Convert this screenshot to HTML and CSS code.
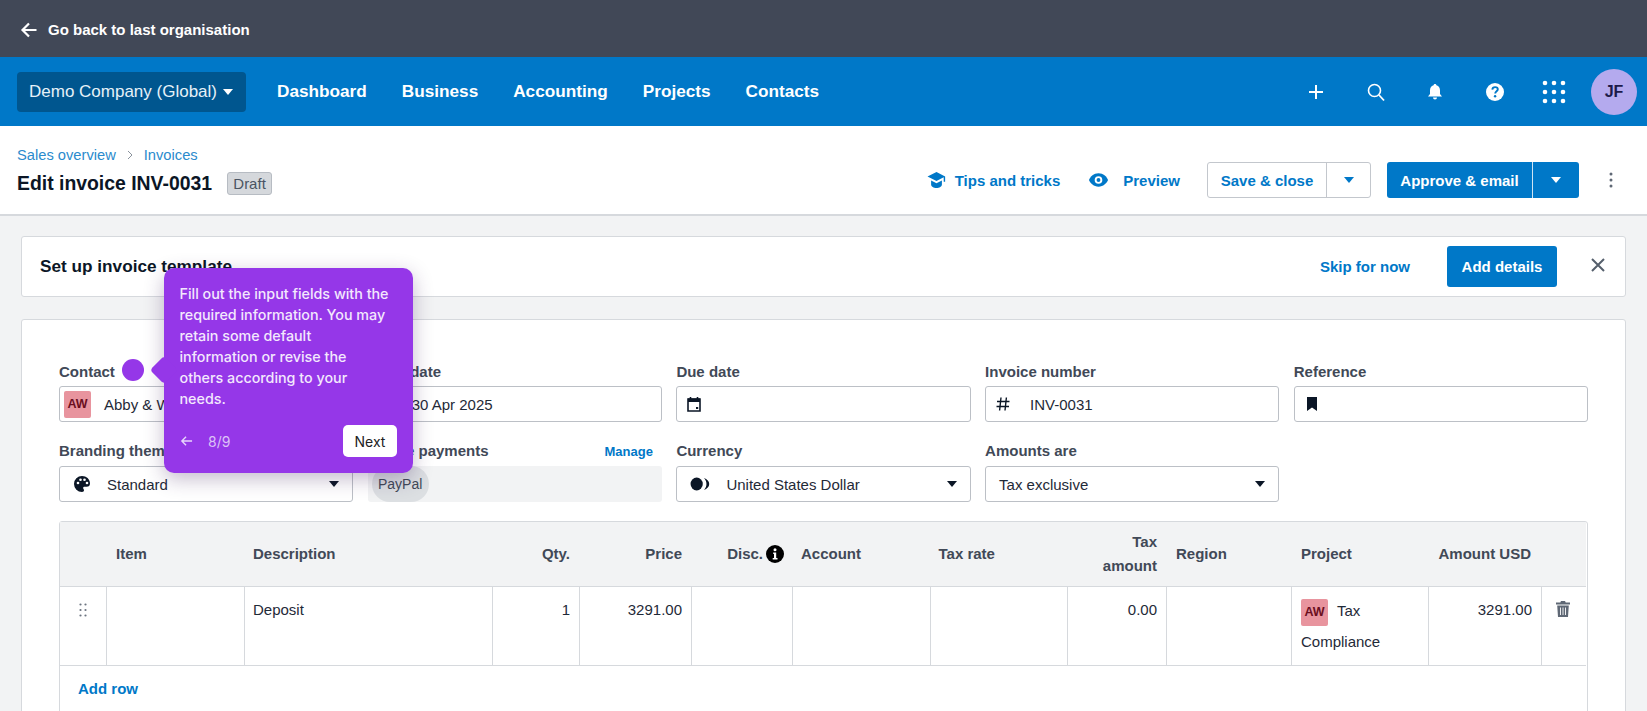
FILE: index.html
```html
<!DOCTYPE html>
<html lang="en">
<head>
<meta charset="utf-8">
<title>Edit invoice INV-0031</title>
<link rel="stylesheet" href="styles.css">
</head>
<body>
<div class="page">
  <div class="backbar">
    <svg class="ic18" viewBox="0 0 18 18"><path d="M16.5 9H3M9 2.5 2.5 9 9 15.5" fill="none" stroke="#fff" stroke-width="2.2"/></svg>
    <span>Go back to last organisation</span>
  </div>
  <nav class="topnav">
    <button class="org">Demo Company (Global)<i class="caret caret-w"></i></button>
    <div class="navlinks"><a>Dashboard</a><a>Business</a><a>Accounting</a><a>Projects</a><a>Contacts</a></div>
    <div class="navicons">
      <svg viewBox="0 0 20 20"><path d="M10 3v14M3 10h14" stroke="#fff" stroke-width="2"/></svg>
      <svg viewBox="0 0 20 20"><circle cx="8.5" cy="8.5" r="6" fill="none" stroke="#fff" stroke-width="1.6"/><path d="m13 13 5 5.5" stroke="#fff" stroke-width="1.8"/></svg>
      <svg viewBox="0 0 20 20"><path d="M10 2c.8 0 1.3.5 1.4 1.2C14 4 15 6 15 8.500v3.500l2 2.500H3l2-2.500V8.500C5 6 6 4 8.600 3.200 8.700 2.500 9.200 2 10 2Zm-2 13.500h4a2 2 0 0 1-4 0Z" fill="#fff"/></svg>
      <svg viewBox="0 0 20 20"><circle cx="10" cy="10" r="9" fill="#fff"/><path d="M7.300 7.600c.1-1.600 1.200-2.500 2.800-2.500s2.700.9 2.700 2.200c0 2-2.500 2-2.600 4.200" fill="none" stroke="#0078c8" stroke-width="1.900"/><circle cx="10.100" cy="14.300" r="1.200" fill="#0078c8"/></svg>
      <svg viewBox="0 0 24 24" class="apps"><g fill="#fff"><circle cx="3" cy="3" r="2.300"/><circle cx="12" cy="3" r="2.300"/><circle cx="21" cy="3" r="2.300"/><circle cx="3" cy="12" r="2.300"/><circle cx="12" cy="12" r="2.300"/><circle cx="21" cy="12" r="2.300"/><circle cx="3" cy="21" r="2.300"/><circle cx="12" cy="21" r="2.300"/><circle cx="21" cy="21" r="2.300"/></g></svg>
      <span class="avatar">JF</span>
    </div>
  </nav>
  <header class="pagehead">
    <div>
      <div class="crumbs"><a>Sales overview</a><svg viewBox="0 0 8 10"><path d="m2 1 4 4-4 4" fill="none" stroke="#8a929c" stroke-width="1"/></svg><a>Invoices</a></div>
      <div class="titlerow"><h1>Edit invoice INV-0031</h1><span class="draft">Draft</span></div>
    </div>
    <div class="actions">
      <a class="tlink tips"><svg viewBox="0 0 22 20"><path d="M11 1 1 6l10 5 8-4v5h1.600V6L11 1Z" fill="#0078c8"/><path d="M5 10.500V15c0 2.400 2.800 4 6 4s6-1.600 6-4v-4.500l-6 3-6-3Z" fill="#0078c8"/></svg>Tips and tricks</a>
      <a class="tlink preview"><svg viewBox="0 0 22 16"><path d="M11 1C6 1 2.500 4.500 1 8c1.500 3.500 5 7 10 7s8.500-3.500 10-7c-1.500-3.500-5-7-10-7Z" fill="#0078c8"/><circle cx="11" cy="8" r="4" fill="#fff"/><circle cx="11" cy="8" r="2" fill="#0078c8"/></svg>Preview</a>
      <div class="split split-o"><span class="main">Save &amp; close</span><span class="drop"><i class="caret caret-b"></i></span></div>
      <div class="split split-f"><span class="main">Approve &amp; email</span><span class="drop"><i class="caret caret-w"></i></span></div>
      <svg class="kebab" viewBox="0 0 4 16"><g fill="#5f6875"><circle cx="2" cy="2" r="1.500"/><circle cx="2" cy="8" r="1.500"/><circle cx="2" cy="14" r="1.500"/></g></svg>
    </div>
  </header>
  <main class="content">
    <section class="banner">
      <strong>Set up invoice template</strong>
      <div class="banner-right">
        <a class="skip">Skip for now</a>
        <button class="addbtn">Add details</button>
        <svg class="close" viewBox="0 0 14 14"><path d="m1 1 12 12M13 1 1 13" stroke="#555f6c" stroke-width="2"/></svg>
      </div>
    </section>
    <section class="card">
      <div class="fields">
        <div class="field"><label>Contact</label><div class="input"><span class="chip">AW</span><span class="val val-contact">Abby &amp; Wong Title Co.</span></div></div>
        <div class="field"><label>Issue date</label><div class="input"><svg class="fi" viewBox="0 0 14 16"><path d="M1 3h12v12H1z" fill="none" stroke="#0b1626" stroke-width="1.600"/><path d="M1 2.500h12V6H1z" fill="#0b1626"/><path d="M3.500 1v2M10.500 1v2" stroke="#0b1626" stroke-width="1.600"/><path d="M9 11h2.200v2H9z" fill="#0b1626"/></svg><span class="val val-date">30 Apr 2025</span></div></div>
        <div class="field"><label>Due date</label><div class="input"><svg class="fi" viewBox="0 0 14 16"><path d="M1 3h12v12H1z" fill="none" stroke="#0b1626" stroke-width="1.600"/><path d="M1 2.500h12V6H1z" fill="#0b1626"/><path d="M3.500 1v2M10.500 1v2" stroke="#0b1626" stroke-width="1.600"/><path d="M9 11h2.200v2H9z" fill="#0b1626"/></svg></div></div>
        <div class="field"><label>Invoice number</label><div class="input"><svg class="fi" viewBox="0 0 14 16"><path d="M5 1.500 3.600 14.500M10.400 1.500 9 14.500M1 5.500h12.500M.5 10.500H13" stroke="#0b1626" stroke-width="1.400"/></svg><span class="val val-num">INV-0031</span></div></div>
        <div class="field"><label>Reference</label><div class="input"><svg class="fi" viewBox="0 0 14 16"><path d="M2 1h10v14l-5-3.500L2 15z" fill="#0b1626"/></svg></div></div>
        <div class="field row2"><label>Branding theme</label><div class="input sel"><svg class="fi fi-l" viewBox="0 0 18 18"><path d="M9 1a8 8 0 0 0 0 16c1.300 0 2-.8 2-1.700 0-1.100-.9-1.400-.9-2.300 0-.8.700-1.300 1.500-1.300H13.500A3.500 3.500 0 0 0 17 8.200C17 4.200 13.400 1 9 1Z" fill="#0b1626"/><g fill="#fff"><circle cx="5" cy="8" r="1.300"/><circle cx="7.500" cy="4.800" r="1.300"/><circle cx="11.500" cy="4.800" r="1.300"/><circle cx="14" cy="8" r="1.300"/></g></svg><span class="val val-sel">Standard</span><i class="caret caret-k"></i></div></div>
        <div class="field row2"><div class="labelrow"><label>Online payments</label><a class="manage">Manage</a></div><div class="paybox"><span class="paychip">PayPal</span></div></div>
        <div class="field row2"><label>Currency</label><div class="input sel"><svg class="fi fi-c" viewBox="0 0 18 12"><ellipse cx="6" cy="6" rx="5.500" ry="5.800" fill="#0b1626"/><path d="M12.500.6c3 1 4.800 3 4.800 5.400s-1.800 4.400-4.800 5.400c1.500-1.400 2.300-3.300 2.300-5.400S14 2 12.500.6Z" fill="#0b1626"/></svg><span class="val val-cur">United States Dollar</span><i class="caret caret-k"></i></div></div>
        <div class="field row2"><label>Amounts are</label><div class="input sel"><span class="val">Tax exclusive</span><i class="caret caret-k"></i></div></div>
      </div>
      <div class="tablewrap">
        <div class="table">
          <div class="th"></div>
          <div class="th th-item">Item</div>
          <div class="th">Description</div>
          <div class="th r">Qty.</div>
          <div class="th r">Price</div>
          <div class="th r disc">Disc.<svg viewBox="0 0 18 18"><circle cx="9" cy="9" r="9" fill="#000"/><path d="M7.200 7.500h3v5.500h1.300v1.500H6.700V13h1.300V9H7.200z" fill="#fff"/><circle cx="9" cy="4.800" r="1.500" fill="#fff"/></svg></div>
          <div class="th">Account</div>
          <div class="th">Tax rate</div>
          <div class="th r">Tax<br>amount</div>
          <div class="th th-wide">Region</div>
          <div class="th th-wide">Project</div>
          <div class="th r th-end">Amount USD</div>
          <div class="th"></div>
          <div class="td center"><svg class="drag" viewBox="0 0 8 14"><g fill="#6c7480"><circle cx="1.500" cy="1.500" r="1.100"/><circle cx="6.500" cy="1.500" r="1.100"/><circle cx="1.500" cy="7" r="1.100"/><circle cx="6.500" cy="7" r="1.100"/><circle cx="1.500" cy="12.500" r="1.100"/><circle cx="6.500" cy="12.500" r="1.100"/></g></svg></div>
          <div class="td"></div>
          <div class="td">Deposit</div>
          <div class="td r">1</div>
          <div class="td r">3291.00</div>
          <div class="td"></div>
          <div class="td"></div>
          <div class="td"></div>
          <div class="td r">0.00</div>
          <div class="td"></div>
          <div class="td project"><span class="chip chip-p">AW</span>Tax Compliance</div>
          <div class="td r">3291.00</div>
          <div class="td center last"><svg class="trash" viewBox="0 0 14 16"><path d="M5 0h4l.7 1.500H14v2H0v-2h4.300L5 0ZM1.200 4.500h11.600L12 16H2L1.200 4.500Z" fill="#5f6875"/><path d="M4.500 6.500v7.500M7 6.500v7.500M9.500 6.500v7.500" stroke="#fff" stroke-width=".9"/></svg></div>
        </div>
        <a class="addrow">Add row</a>
      </div>
    </section>
  </main>
  <i class="dot"></i>
  <aside class="tip">
    <p>Fill out the input fields with the<br>required information. You may<br>retain some default<br>information or revise the<br>others according to your<br>needs.</p>
    <div class="tipfoot">
      <svg viewBox="0 0 14 12"><path d="M13 6H2M6.500 1.500 2 6l4.500 4.500" fill="none" stroke="#e8d5fb" stroke-width="1.500"/></svg>
      <span class="count">8/9</span>
      <button>Next</button>
    </div>
  </aside>
</div>
</body>
</html>
```
FILE: styles.css
```css
* { box-sizing: border-box; }
html, body { margin: 0; height: 100%; overflow: hidden; }
body { font-family: "Liberation Sans", Arial, sans-serif; font-size: 15px; color: #1f2a38; background: #f2f3f4; }
a { color: #0078c8; text-decoration: none; }
button { font-family: inherit; border: 0; }
.page { position: relative; height: 711px; overflow: hidden; }

.backbar { height: 57px; background: #414857; color: #fff; font-weight: 700; display: flex; align-items: center; gap: 10px; padding: 2px 0 0 20px; }
.ic18 { width: 18px; height: 18px; }

.topnav { height: 69px; background: #0078c8; display: flex; align-items: center; padding: 0 10px 0 17px; color: #fff; }
.org { width: 229px; height: 40px; background: #00568f; color: #e6f1f8; font-size: 17px; border-radius: 4px; display: flex; align-items: center; padding: 0 0 0 12px; gap: 6px; white-space: nowrap; }
.navlinks { display: flex; gap: 35px; margin-left: 31px; font-weight: 700; font-size: 17.200px; }
.navlinks a { color: #fff; }
.navicons { margin-left: auto; display: flex; align-items: center; }
.navicons svg { width: 20px; height: 20px; margin-right: 39.5px; }
.navicons svg.apps { width: 24px; height: 24px; margin: 0 25px 0 -2px; }
.avatar { width: 46px; height: 46px; border-radius: 50%; background: #b4aaee; color: #1c1a4a; font-weight: 700; font-size: 16px; display: flex; align-items: center; justify-content: center; }

.caret { display: inline-block; width: 0; height: 0; border-left: 5.500px solid transparent; border-right: 5.500px solid transparent; border-top: 6px solid; }
.caret-w { color: #fff; }
.caret-b { color: #0078c8; }
.caret-k { color: #0b1626; margin-left: auto; }

.pagehead { height: 90px; background: #fff; border-bottom: 2px solid #d6d9dd; display: flex; justify-content: space-between; padding: 19px 0 0 17px; }
.crumbs { display: flex; align-items: center; gap: 10px; height: 20px; color: #2b8bcd; font-size: 14.700px; }
.crumbs a { color: #2b8bcd; }
.crumbs svg { width: 8px; height: 10px; }
.titlerow { display: flex; align-items: center; gap: 15px; margin-top: 6px; height: 24px; }
h1 { margin: 0; font-size: 19.400px; font-weight: 700; color: #0b1626; }
.draft { width: 45px; height: 23px; background: #d5d8dc; border: 1px solid #b7bcc3; border-radius: 3px; color: #4a5462; font-size: 15px; display: flex; align-items: center; justify-content: center; }
.actions { display: flex; align-items: center; height: 36px; margin-top: 17px; padding-right: 34px; }
.tlink { font-weight: 700; display: flex; align-items: center; }
.tlink svg { width: 21px; height: 18px; }
.tips svg { margin-right: 8px; }
.tips { margin-right: 28px; }
.preview svg { margin-right: 14px; }
.preview { margin-right: 27px; }
.split { display: flex; height: 36px; border-radius: 3px; font-weight: 700; }
.split .main { display: flex; align-items: center; justify-content: center; }
.split .drop { display: flex; align-items: center; justify-content: center; }
.split-o { width: 164px; border: 1px solid #c3c7cd; color: #0078c8; margin-right: 16px; }
.split-o .drop { width: 43px; }
.split-o .main { flex: 1; border-right: 1px solid #c3c7cd; }
.split-f { width: 192px; background: #0078c8; color: #fff; }
.split-f .drop { width: 46px; }
.split-f .main { flex: 1; border-right: 1px solid #cfe4f3; }
.kebab { width: 4px; height: 16px; margin-left: 30px; }

.content { padding: 20px 21px 0; }
.banner { height: 61px; width: 1605px; background: #fff; border: 1px solid #d6d9dd; border-radius: 3px; display: flex; align-items: center; justify-content: space-between; padding: 0 20px 0 18px; }
.banner strong { font-size: 17.200px; color: #0b1626; }
.banner-right { display: flex; align-items: center; }
.skip { font-weight: 700; margin-right: 37px; }
.addbtn { width: 110px; height: 41px; background: #0078c8; color: #fff; font-size: 15px; font-weight: 700; border-radius: 3px; margin-right: 34px; }
.close { width: 14px; height: 14px; margin-bottom: 3px; }

.card { width: 1605px; height: 420px; margin-top: 22px; background: #fff; border: 1px solid #d6d9dd; border-radius: 3px; padding: 42px 37px 0 37px; }
.fields { display: grid; grid-template-columns: repeat(5, 294.2px); column-gap: 14.5px; row-gap: 19px; }
.field label { display: block; font-weight: 700; color: #414957; line-height: 20px; }
.field > label { margin-bottom: 4px; }
.row2 > label { margin-bottom: 5px; }
.labelrow { display: flex; justify-content: space-between; align-items: center; height: 25px; padding: 0 9px 5px 0; }
.manage { font-weight: 700; font-size: 13px; }
.input { height: 36px; border: 1px solid #bcc0c6; border-radius: 3px; background: #fff; display: flex; align-items: center; padding: 0 10px; color: #1f2a38; white-space: nowrap; overflow: hidden; }
.input.sel { padding: 0 13px; }
.chip { width: 27px; height: 27px; margin-left: -6px; background: #e8949e; border-radius: 2px; color: #6b0f1e; font-weight: 700; font-size: 12.500px; display: inline-flex; align-items: center; justify-content: center; flex: none; }
.val-contact { margin-left: 13px; }
.fi { width: 14px; height: 16px; flex: none; }
.fi-l { width: 18px; height: 18px; }
.fi-c { width: 20px; height: 14px; }
.val-date { margin-left: 19px; }
.val-num { margin-left: 20px; }
.val-sel { margin-left: 16px; }
.val-cur { margin-left: 16px; }
.paybox { height: 36px; background: #f2f3f4; border-radius: 3px; display: flex; align-items: center; padding-left: 4px; }
.paychip { height: 36px; width: 57px; background: #dcdfe2; border-radius: 18px; color: #414957; font-size: 14px; display: flex; align-items: center; justify-content: center; }

.tablewrap { margin-top: 19px; width: 1529px; height: 240px; border: 1px solid #d6d9dd; border-radius: 3px 3px 0 0; }
.table { display: grid; grid-template-columns: 47px 138px 248px 87px 112px 101px 137.500px 137px 99.500px 125px 137px 113px 44px; grid-template-rows: 65px 79px; }
.th { background: #f2f3f4; border-bottom: 1px solid #d6d9dd; font-weight: 700; color: #414957; padding: 0 10px 0 8px; display: flex; align-items: center; line-height: 24px; }
.th-item, .th-wide { padding-left: 9px; }
.th-end { padding-right: 11px; }
.th.r { justify-content: flex-end; text-align: right; }
.disc { gap: 3px; padding-right: 9px; white-space: nowrap; }
.disc svg { width: 18px; height: 18px; flex: none; }
.td { border-right: 1px solid #d6d9dd; border-bottom: 1px solid #d6d9dd; padding: 13px 9px 0 8px; line-height: 20px; color: #1f2a38; }
.td.r { text-align: right; }
.td.center { display: flex; justify-content: center; }
.td.last { border-right: 0; padding: 14px 3px 0 0; }
.drag { width: 8px; height: 14px; margin-top: 3px; }
.trash { width: 14px; height: 16px; }
.project { padding: 8px 9px 0 9px; line-height: 31px; }
.chip-p { margin: 0 9px 0 0; vertical-align: middle; }
.addrow { display: block; margin: 13px 0 0 18px; font-weight: 700; line-height: 20px; width: 60px; }

.dot { position: absolute; left: 122px; top: 359px; width: 22px; height: 22px; border-radius: 50%; background: #9537e8; }
.tip { position: absolute; left: 164px; top: 268px; width: 249px; height: 205px; background: #9537e8; border-radius: 10px; padding: 15px 10px 0 15.500px; color: #f3e8fd; font-family: "Inter", sans-serif; font-size: 14.300px; font-weight: 500; line-height: 21px; box-shadow: 0 6px 20px rgba(60, 30, 90, 0.3); }
.tip::before { content: ""; position: absolute; left: -10px; top: 92px; width: 20px; height: 20px; background: #9537e8; transform: rotate(45deg); border-radius: 4px; }
.tip p { margin: 0; position: relative; white-space: nowrap; }
.tipfoot { position: absolute; left: 16px; right: 16px; bottom: 16px; display: flex; align-items: center; height: 32px; }
.tipfoot svg { width: 13px; height: 12px; }
.count { margin-left: 15px; color: #dcc2f7; font-size: 14px; font-weight: 400; }
.tipfoot button { margin-left: auto; width: 54px; height: 32px; background: #fff; color: #222; font-family: "Inter", sans-serif; font-size: 14px; font-weight: 400; border-radius: 5px; }
```
